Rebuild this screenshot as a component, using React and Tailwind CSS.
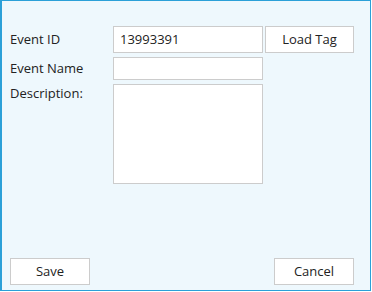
export default function App() {
  const font = { fontFamily: '"Open Sans", "Noto Sans", sans-serif' };
  return (
    <div className="w-[372px] h-[292px] bg-white" style={font}>
      <div className="w-[371px] h-[291px] border border-l-2 border-[#2ba0d8] bg-[#eef8fd] flex flex-col justify-between pt-[25px] pb-[5px] text-[13px] text-[#222]">
        <div className="flex flex-col pl-[8px]">
          <div className="flex items-center h-[27px]">
            <div className="w-[103px]">Event ID</div>
            <div className="w-[150px] h-[27px] bg-white border border-[#cccccc] flex items-center pl-[6px]">13993391</div>
            <button className="ml-[2px] w-[89px] h-[27px] bg-white border border-[#cccccc] flex items-center justify-center">Load Tag</button>
          </div>
          <div className="flex items-center h-[23px] mt-[4px]">
            <div className="w-[103px]">Event Name</div>
            <div className="w-[150px] h-[23px] bg-white border border-[#cccccc]"></div>
          </div>
          <div className="flex items-start h-[100px] mt-[4px]">
            <div className="w-[103px] leading-[18px]">Description:</div>
            <div className="w-[150px] h-[100px] bg-white border border-[#cccccc]"></div>
          </div>
        </div>
        <div className="flex justify-between pl-[8px] pr-[16px]">
          <button className="w-[80px] h-[27px] bg-white border border-[#cccccc] flex items-center justify-center">Save</button>
          <button className="w-[80px] h-[27px] bg-white border border-[#cccccc] flex items-center justify-center">Cancel</button>
        </div>
      </div>
    </div>
  );
}
